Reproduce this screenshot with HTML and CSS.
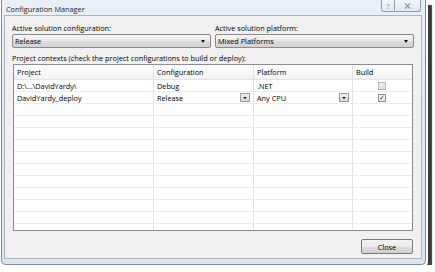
FILE: index.html
```html
<!DOCTYPE html>
<html lang="en">
<head>
    <meta charset="UTF-8">
    <title>Configuration Manager</title>
    <link rel="stylesheet" href="styles.css">
</head>
<body>

    <!-- Fenêtre -->
    <div class="window">
        <div class="titlebar">
            <span class="title">Configuration Manager</span>
            <div class="caption-buttons">
                <span class="cap-btn help">?</span>
                <span class="cap-btn close">
                    <svg width="7" height="6" viewBox="0 0 7 6"><path d="M1 0.5 L6 5.5 M6 0.5 L1 5.5" stroke="#9098a2" stroke-width="1.2" fill="none"/></svg>
                </span>
            </div>
        </div>

        <div class="client">
            <div class="solution-row">
                <div class="field">
                    <div class="label">Active solution configuration:</div>
                    <div class="combo"><span>Release</span><span class="arrow"></span></div>
                </div>
                <div class="field">
                    <div class="label">Active solution platform:</div>
                    <div class="combo"><span>Mixed Platforms</span><span class="arrow"></span></div>
                </div>
            </div>

            <div class="label contexts">Project contexts (check the project configurations to build or deploy):</div>

            <div class="grid">
                <div class="grid-row grid-head">
                    <div class="cell">Project</div>
                    <div class="cell">Configuration</div>
                    <div class="cell">Platform</div>
                    <div class="cell">Build</div>
                </div>
                <div class="grid-row">
                    <div class="cell">D:\...\DavidYardy\</div>
                    <div class="cell">Debug</div>
                    <div class="cell">.NET</div>
                    <div class="cell center"><span class="check disabled"></span></div>
                </div>
                <div class="grid-row">
                    <div class="cell">DavidYardy_deploy</div>
                    <div class="cell">Release<span class="mini-drop"><span class="arrow"></span></span></div>
                    <div class="cell">Any CPU<span class="mini-drop"><span class="arrow"></span></span></div>
                    <div class="cell center"><span class="check checked">&#10003;</span></div>
                </div>
                <div class="grid-row"><div class="cell"></div><div class="cell"></div><div class="cell"></div><div class="cell"></div></div>
                <div class="grid-row"><div class="cell"></div><div class="cell"></div><div class="cell"></div><div class="cell"></div></div>
                <div class="grid-row"><div class="cell"></div><div class="cell"></div><div class="cell"></div><div class="cell"></div></div>
                <div class="grid-row"><div class="cell"></div><div class="cell"></div><div class="cell"></div><div class="cell"></div></div>
                <div class="grid-row"><div class="cell"></div><div class="cell"></div><div class="cell"></div><div class="cell"></div></div>
                <div class="grid-row"><div class="cell"></div><div class="cell"></div><div class="cell"></div><div class="cell"></div></div>
                <div class="grid-row"><div class="cell"></div><div class="cell"></div><div class="cell"></div><div class="cell"></div></div>
                <div class="grid-row"><div class="cell"></div><div class="cell"></div><div class="cell"></div><div class="cell"></div></div>
                <div class="grid-row"><div class="cell"></div><div class="cell"></div><div class="cell"></div><div class="cell"></div></div>
                <div class="grid-row"><div class="cell"></div><div class="cell"></div><div class="cell"></div><div class="cell"></div></div>
                <div class="grid-row"><div class="cell"></div><div class="cell"></div><div class="cell"></div><div class="cell"></div></div>
            </div>

            <div class="footer">
                <button class="close-button">Close</button>
            </div>
        </div>
    </div>

</body>
</html>
```

FILE: styles.css
```css
body {
    margin: 0;
    background-color: #ffffff;
    font-family: "Open Sans", "DejaVu Sans", sans-serif;
    font-size: 7.3px;
    color: #000000;
}
.window {
    box-sizing: border-box;
    width: 425px;
    height: 265px;
    margin-left: 1px;
    padding: 0 3px 5px 2px;
    border: 1px solid #7d8b99;
    border-top: none;
    border-radius: 0 0 5px 5px;
    background: linear-gradient(#e8eff7, #dbe5ef);
    box-shadow: 2px 2px 0 #ffffff, 6px 5px 1px #3c3c3c;
}
.titlebar {
    height: 15px;
    display: flex;
    justify-content: space-between;
    align-items: flex-start;
}
.title {
    padding-left: 2px;
    line-height: 19px;
    color: #222222;
}
.caption-buttons {
    display: flex;
    height: 11px;
    margin-right: 1px;
    border: 1px solid #8f9cab;
    border-top: none;
    border-radius: 0 0 3px 3px;
    background: linear-gradient(#f3f6fa, #e2e9f1);
}
.cap-btn {
    display: flex;
    align-items: center;
    justify-content: center;
    color: #8a929c;
    font-size: 8px;
}
.help {
    width: 12px;
    border-right: 1px solid #8f9cab;
}
.close {
    width: 25px;
}
.client {
    box-sizing: border-box;
    height: 244px;
    padding: 7px 7px 0 7px;
    border: 1px solid #a9b6c4;
    background-color: #f0f0f0;
}
.solution-row {
    display: flex;
    gap: 4px;
}
.field {
    flex: 1;
}
.label {
    line-height: 10px;
    margin-bottom: 1px;
    white-space: nowrap;
}
.combo {
    box-sizing: border-box;
    height: 14px;
    display: flex;
    align-items: center;
    justify-content: space-between;
    padding: 0 5px 0 2px;
    border: 1px solid #8b8b8b;
    border-radius: 2px;
    background: linear-gradient(#f4f4f4 0%, #eaeaea 50%, #dcdcdc 51%, #d2d2d2 100%);
}
.arrow {
    width: 0;
    height: 0;
    border-left: 2.5px solid transparent;
    border-right: 2.5px solid transparent;
    border-top: 3px solid #111111;
}
.contexts {
    margin: 5px 0 1px 0;
}
.grid {
    box-sizing: border-box;
    height: 167px;
    margin: 0 1px 0 1px;
    border: 1px solid #8a8f96;
    background-color: #ffffff;
    overflow: hidden;
}
.grid-row {
    display: grid;
    grid-template-columns: 140px 100px 99px 1fr;
    height: 12px;
    box-sizing: border-box;
    border-bottom: 1px solid #ececec;
}
.grid-head {
    height: 15px;
    border-bottom: 1px solid #e2e2e2;
    background: linear-gradient(#ffffff, #f3f3f5);
}
.cell {
    display: flex;
    align-items: center;
    justify-content: space-between;
    padding: 0 3px;
    border-right: 1px solid #e2e2e2;
    white-space: nowrap;
}
.cell:last-child {
    border-right: none;
}
.center {
    justify-content: center;
}
.mini-drop {
    box-sizing: border-box;
    width: 10px;
    height: 9px;
    display: flex;
    align-items: center;
    justify-content: center;
    border: 1px solid #9c9c9c;
    background: linear-gradient(#f2f2f2, #d6d6d6);
}
.mini-drop .arrow {
    border-left-width: 2px;
    border-right-width: 2px;
    border-top-width: 2px;
}
.check {
    box-sizing: border-box;
    width: 8px;
    height: 8px;
    margin-right: 1px;
    display: flex;
    align-items: center;
    justify-content: center;
    font-size: 7px;
    line-height: 1;
}
.disabled {
    border: 1px solid #b9b9b9;
    background: linear-gradient(#ececec, #dcdcdc);
}
.checked {
    border: 1px solid #8e9097;
    background: linear-gradient(#f6f6f6, #e2e2e2);
    color: #3b4f8e;
}
.footer {
    display: flex;
    justify-content: flex-end;
    padding: 8px 1px 0 0;
}
.close-button {
    box-sizing: border-box;
    width: 52px;
    height: 15px;
    padding: 0;
    font-family: inherit;
    font-size: 7.3px;
    color: #000000;
    border: 1px solid #7a7a7a;
    border-radius: 2px;
    background: linear-gradient(#f3f3f3 0%, #ebebeb 50%, #dddddd 51%, #cfcfcf 100%);
}
```
